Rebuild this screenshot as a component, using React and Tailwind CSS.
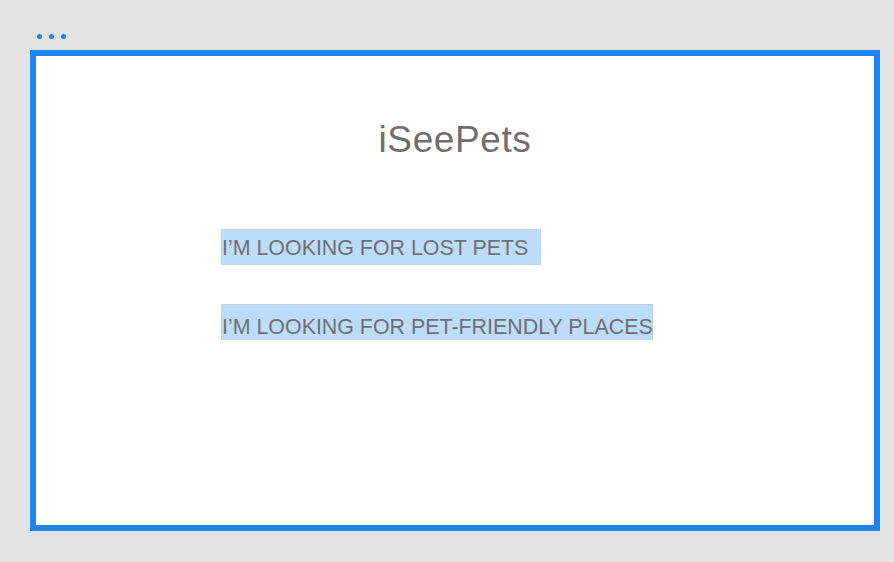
export default function App() {
  return (
    <div className="w-[894px] h-[562px] bg-[#e3e3e3] overflow-hidden" style={{ fontFamily: '"Liberation Sans", Arial, sans-serif' }}>
      <div className="flex gap-[7px] pl-[37px] pt-[34px] h-[50px]">
        <span className="w-[5px] h-[5px] rounded-full bg-[#1a84f2]" />
        <span className="w-[5px] h-[5px] rounded-full bg-[#1a84f2]" />
        <span className="w-[5px] h-[5px] rounded-full bg-[#1a84f2]" />
      </div>
      <div className="ml-[30px] w-[850px] h-[481px] border-[6px] border-[#1a84f2] bg-white">
        <h1 className="mt-[64px] text-center text-[37px] leading-[40px] tracking-[0.6px] text-[#6f6f6f] font-normal">
          iSeePets
        </h1>
        <div className="mt-[69px] pl-[185px] flex flex-col items-start gap-[39px]">
          <div className="w-[320px] h-[36px] flex items-center bg-[#bcdcfb] border border-[#c4d2df] text-[21.4px] leading-[24px] text-[#707070] whitespace-nowrap">
            <span className="mt-[2px]">I’M LOOKING FOR LOST PETS</span>
          </div>
          <div className="w-[432px] h-[36px] flex items-center bg-[#bcdcfb] border border-[#c4d2df] text-[21.4px] leading-[24px] text-[#707070] whitespace-nowrap">
            <span className="mt-[10px]">I’M LOOKING FOR PET-FRIENDLY PLACES</span>
          </div>
        </div>
      </div>
    </div>
  );
}
